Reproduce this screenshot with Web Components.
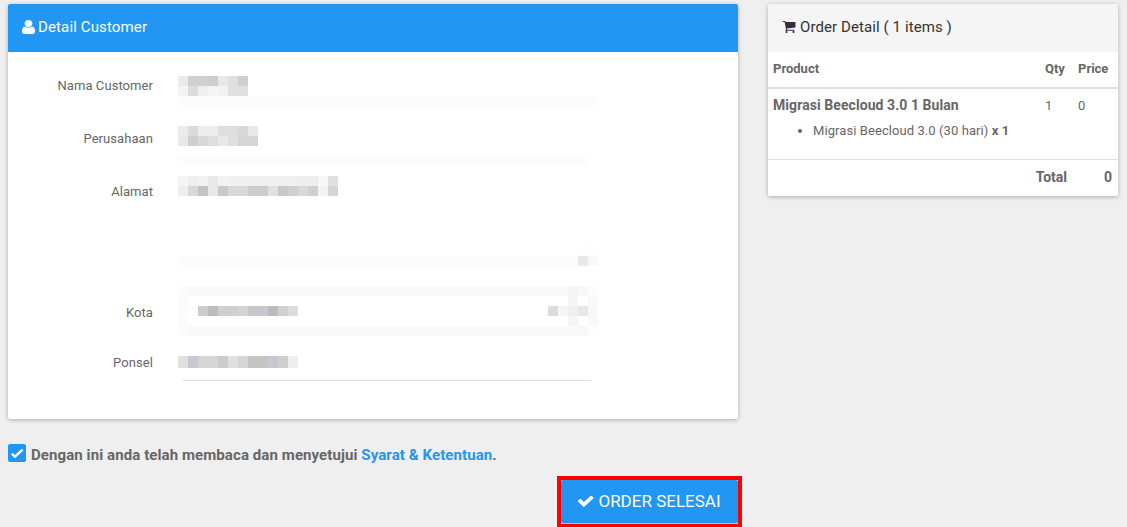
<!DOCTYPE html>
<html lang="id"><head><meta charset="utf-8"><title>Order</title>
<style>
html,body{margin:0;height:527px;overflow:hidden;background:#efefef}
body{font-family:Roboto,"Liberation Sans",sans-serif;color:#666}
</style></head><body>
<x-page>
  <div slot="left">
    <x-card heading="Detail Customer" icon="user" tone="blue">
      <x-form>
        <x-row label="Nama Customer" h="50" offset="4"><x-mosaic data="eaeaea d0d0d0 d0d0d0 cdcdcd e8e8e8 dedede cfcfcf|f3f3f3 dcdcdc efefef f5f5f5 f2f2f2 e0e0e0 e0e0e0|fcfcfc*42"></x-mosaic></x-row>
        <x-row label="Perusahaan" h="50" offset="7"><x-mosaic data="ebebeb dadada ededed ededed dedede dedede d8d8d8 e8e8e8|e8e8e8 cfcfcf d8d8d8 dedede e8e8e8 e0e0e0 d5d5d5 d5d5d5|ffffff|fcfcfc*41"></x-mosaic></x-row>
        <x-row label="Alamat" h="110" offset="10"><x-mosaic data="f5f5f5 eeeeee f2f2f2 e8e8e8 f2f2f2 f0f0f0*7 eeeeee*2 f7f7f7 e0e0e0|eeeeee d8d8d8 c4c4c4 e8e8e8 c8c8d0 d8d8d8*2 cccccc*2 e0e0e0 c8c8c8 d0d0d0 d8d8d8 cfcfcf f3f3f3 d5d5d5|ffffff|ffffff|ffffff|ffffff|ffffff|ffffff*40 fdfdfd*2|fcfcfc*40 e8e8e8 f9f9f9"></x-mosaic></x-row>
        <x-row label="Kota" h="70" offset="21"><x-mosaic data="fcfcfc f9f9f9*38 f5f5f5 f8f8f8 fcfcfc|fbfbfb ffffff*38 f5f5f5 ffffff f9f9f9|fcfcfc fdfdfd cccccc bbbbbb cfcfcf*2 d3d3d3 c8c8c8 c8c8d0 bbbbbb d0d0d0 dcdcdc ffffff*25 dcdcdc f5f5f5 f0f0f0 e8e8e8 f8f8f8|fbfbfb ffffff*38 f5f5f5 ffffff f9f9f9|fcfcfc f9f9f9*39 f8f8f8 fdfdfd"></x-mosaic></x-row>
        <x-row label="Ponsel" h="24" offset="1"><x-mosaic cell-h="12" data="e0e0e0 c8c8d0 d5d5d5*2 cccccc e0e0e0 d5d5d5 c5c5c5*2 c8c8d0 cfcfcf eeeeee"></x-mosaic></x-row>
        <x-rule></x-rule>
      </x-form>
    </x-card>
    <x-agree>Dengan ini anda telah membaca dan menyetujui <a slot="link">Syarat &amp; Ketentuan</a></x-agree>
    <x-submit>ORDER SELESAI</x-submit>
  </div>
  <x-card slot="right" heading="Order Detail ( 1 items )" icon="cart" tone="grey">
    <x-order></x-order>
  </x-card>
</x-page>
<script>
const ICONS={
 user:'<path d="M1536 1399q0 109-62.5 187t-150.5 78h-854q-88 0-150.5-78t-62.5-187q0-85 8.5-160.5t31.5-152 58.5-131 94-89 134.5-34.5q131 128 313 128t313-128q76 0 134.5 34.5t94 89 58.5 131 31.5 152 8.5 160.5zm-256-887q0 159-112.5 271.5t-271.5 112.5-271.5-112.5-112.5-271.5 112.5-271.5 271.5-112.5 271.5 112.5 112.5 271.5z"/>',
 cart:'<path d="M704 1536q0 52-38 90t-90 38-90-38-38-90 38-90 90-38 90 38 38 90zm896 0q0 52-38 90t-90 38-90-38-38-90 38-90 90-38 90 38 38 90zm128-1088v512q0 24-16.5 42.5t-40.5 21.5l-1044 122q13 60 13 70 0 16-24 64h920q26 0 45 19t19 45-19 45-45 19h-1024q-26 0-45-19t-19-45q0-11 8-31.5t16-36 21.5-40 15.5-29.5l-177-823h-204q-26 0-45-19t-19-45 19-45 45-19h256q16 0 28.5 6.5t19.5 15.5 13 24.5 8 26 5.5 29.5 4.5 26h1201q26 0 45 19t19 45z"/>',
 check:'<path d="M1671 566q0 40-28 68l-724 724-136 136q-28 28-68 28t-68-28l-136-136-362-362q-28-28-28-68t28-68l136-136q28-28 68-28t68 28l294 295 656-657q28-28 68-28t68 28l136 136q28 28 28 68z"/>'};
const svg=(n,vb,s)=>`<svg viewBox="${vb}" preserveAspectRatio="none" style="${s}" fill="currentColor" aria-hidden="true">${ICONS[n]}</svg>`;
function def(name,html,extra){
  customElements.define(name,class extends HTMLElement{
    constructor(){super();this.attachShadow({mode:'open'}).innerHTML=html;}
    connectedCallback(){extra&&extra(this)}
  });
}
def('x-page',`<style>:host{display:flex;gap:30px;padding:4px 9px 0 8px;align-items:flex-start}
.l{width:730px;flex:none}.r{width:350px;flex:none}</style>
<div class="l"><slot name="left"></slot></div><div class="r"><slot name="right"></slot></div>`);
def('x-card',`<style>:host{display:block;background:#fff;border-radius:2px;box-shadow:0 1px 4px rgba(0,0,0,.28);overflow:hidden}
header{height:48px;box-sizing:border-box;display:flex;align-items:center;padding:0 0 2px 14px;gap:3px;font-size:15px;letter-spacing:.13px}
:host([tone=blue]) header{background:#2196f3;color:#fff}
:host([tone=grey]) header{background:#f5f5f5;color:#333;gap:4px;letter-spacing:.09px}
svg{flex:none}</style><header></header><slot></slot>`,el=>{
  const h=el.shadowRoot.querySelector('header');
  const i=el.getAttribute('icon');
  h.innerHTML=svg(i,i==='user'?'256 128 1280 1536':'0 256 1792 1408',i==='user'?'width:13px;height:14px':'width:14px;height:12px;color:#3a2a3f')+'<span>'+el.getAttribute('heading')+'</span>';
});
def('x-form',`<style>:host{display:block;padding:24px 0 38px}</style><slot></slot>`);
def('x-row',`<style>:host{display:flex;box-sizing:border-box}
.lab{width:145px;flex:none;text-align:right;font-size:13px;line-height:12px;color:#666;letter-spacing:.07px}
.f{margin-left:25px}</style><div class="lab"></div><div class="f"><slot></slot></div>`,el=>{
  el.style.height=el.getAttribute('h')+'px';
  const l=el.shadowRoot.querySelector('.lab');
  l.textContent=el.getAttribute('label');
  l.style.paddingTop=el.getAttribute('offset')+'px';
});
def('x-mosaic',`<style>:host{display:block}.r{display:flex}.r i{display:block;width:10px;flex:none}</style><div id="m"></div>`,el=>{
  const ch=el.getAttribute('cell-h')||10;
  el.shadowRoot.getElementById('m').innerHTML=el.getAttribute('data').split('|').map(r=>{
    let c='';
    r.trim().split(/\s+/).forEach(t=>{const [h,n]=t.split('*');for(let k=0;k<(+n||1);k++)c+=`<i style="background:#${h};height:${ch}px"></i>`});
    return `<div class="r">${c}</div>`;
  }).join('');
});
def('x-rule',`<style>:host{display:block;height:1px;background:#ddd;margin-left:175px;width:408px}</style>`);
def('x-agree',`<style>:host{display:flex;align-items:flex-start;gap:5px;margin-top:25px;height:20px;line-height:20px;font-size:15px;letter-spacing:.09px;font-weight:700;color:#666;white-space:pre}
.box{width:18px;height:18px;border-radius:2px;background:#2196f3;flex:none;display:block}
span{padding-top:1px}
::slotted(a){color:#2196f3}</style>
<svg class="box" viewBox="0 0 18 18" aria-hidden="true"><polyline points="3.7,9.6 7,12.6 14.6,5.6" fill="none" stroke="#fff" stroke-width="2.4"/></svg><span><slot></slot><slot name="link"></slot>.</span>`);
def('x-submit',`<style>:host{display:flex;justify-content:flex-end;margin-top:12px;margin-right:-4px}
.frame{border:4px solid #f00;border-bottom-width:3px;display:block;box-sizing:border-box;width:185px;height:51px}
button{display:flex;align-items:center;justify-content:center;gap:4px;width:177px;height:43px;margin:0;border:0;border-radius:2px;background:#2196f3;color:#fff;font:400 17px Roboto,sans-serif;box-shadow:0 1px 1px rgba(0,0,0,.25);padding:0 0 2px}</style>
<div class="frame"><button>${svg('check','128 256 1600 1300','width:16px;height:12px')}<span><slot></slot></span></button></div>`);
def('x-order',`<style>:host{display:block;font-size:13px;color:#666}
table{border-collapse:collapse;width:100%;table-layout:fixed}
th,td{padding:0;text-align:left;vertical-align:top}
thead th{height:36px;font-size:13px;border-bottom:2px solid #ddd;vertical-align:middle;padding-bottom:2px;box-sizing:border-box}
.p{padding-left:5px}
tbody td{padding-top:8px;height:71px;box-sizing:border-box}
.name{font-size:14px;font-weight:700;line-height:17px;letter-spacing:.07px}
ul{margin:9px 0 0;padding:0 0 0 40px;line-height:16px;letter-spacing:.08px}
tfoot td{border-top:1px solid #ddd;height:37px;font-size:14px;font-weight:700;vertical-align:middle;box-sizing:border-box;padding-bottom:2px}
.t{text-align:right;padding-right:11px}.z{text-align:right;padding-right:6px}
.num{line-height:17px}</style>
<table><colgroup><col style="width:277px"><col style="width:33px"><col style="width:40px"></colgroup>
<thead><tr><th class="p">Product</th><th>Qty</th><th>Price</th></tr></thead>
<tbody><tr><td class="p"><div class="name">Migrasi Beecloud 3.0 1 Bulan</div><ul><li>Migrasi Beecloud 3.0 (30 hari) <b>x 1</b></li></ul></td><td class="num">1</td><td class="num">0</td></tr></tbody>
<tfoot><tr><td colspan="2" class="t">Total</td><td class="z">0</td></tr></tfoot></table>`);
</script></body></html>
